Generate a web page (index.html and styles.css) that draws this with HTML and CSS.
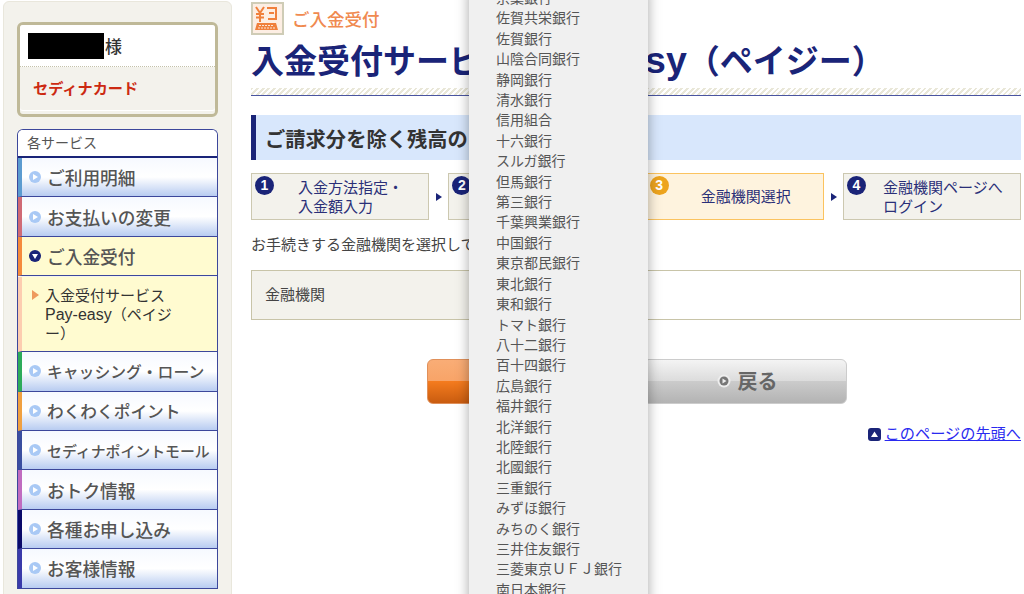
FILE: index.html
```html
<!DOCTYPE html>
<html lang="ja">
<head>
    <meta charset="UTF-8">
    <meta name="viewport" content="width=device-width, initial-scale=1.0">
    <title>入金受付サービス Pay-easy（ペイジー）</title>
    <link rel="stylesheet" href="styles.css">
</head>
<body>
<div class="page">
    <!-- サイドバー -->
    <div class="sidebar">
        <div class="user-card">
            <div class="user-name"><span class="redacted"></span>様</div>
            <div class="user-brand">セディナカード</div>
        </div>

        <div class="menu">
            <div class="menu-title">各サービス</div>
            <a class="menu-item bar-blue"><span class="dot"></span>ご利用明細</a>
            <a class="menu-item bar-red"><span class="dot"></span>お支払いの変更</a>
            <a class="menu-item active bar-orange"><span class="dot"></span>ご入金受付</a>
            <a class="menu-sub"><span class="sub-arrow"></span>入金受付サービス<br><span class="latin">Pay-easy</span>（ペイジ<br>ー）</a>
            <a class="menu-item bar-green text-16"><span class="dot"></span>キャッシング・ローン</a>
            <a class="menu-item bar-amber text-17"><span class="dot"></span>わくわくポイント</a>
            <a class="menu-item bar-indigo text-15"><span class="dot"></span>セディナポイントモール</a>
            <a class="menu-item bar-purple"><span class="dot"></span>おトク情報</a>
            <a class="menu-item bar-navy"><span class="dot"></span>各種お申し込み</a>
            <a class="menu-item bar-violet"><span class="dot"></span>お客様情報</a>
        </div>
    </div>

    <!-- メイン -->
    <div class="main">
        <div class="crumb">
            <span class="crumb-icon">
                <svg width="29" height="29" viewBox="0 0 29 29">
                    <path d="M3 3l4 6 4-6M7 9v9M3 10h8M3 13.500h8" fill="none" stroke="#f0803c" stroke-width="2"/>
                    <path d="M14 4h9v11h-8M16 9h5" fill="none" stroke="#f0803c" stroke-width="2"/>
                    <path d="M4 19h19l2 7H2z" fill="#f0803c"/>
                    <path d="M6 21.500h15M5 24h17" stroke="#fbe6d8" stroke-width="1" stroke-dasharray="2 1"/>
                </svg>
            </span>
            <span class="crumb-text">ご入金受付</span>
        </div>

        <h1>入金受付サービス <span class="latin">Pay-easy</span>（ペイジー）</h1>
        <div class="stripes"></div>

        <h2>ご請求分を除く残高のお支払い</h2>

        <div class="steps">
            <div class="step step-1"><span class="num">1</span>入金方法指定・<br>入金額入力</div>
            <span class="step-arrow"></span>
            <div class="step"><span class="num">2</span></div>
            <span class="step-arrow"></span>
            <div class="step step-3 current"><span class="num">3</span>金融機関選択</div>
            <span class="step-arrow"></span>
            <div class="step step-4"><span class="num">4</span>金融機関ページへ<br>ログイン</div>
        </div>

        <p class="lead">お手続きする金融機関を選択してください。</p>

        <div class="form-row">
            <div class="form-label">金融機関</div>
            <div class="form-value"></div>
        </div>

        <div class="buttons">
            <a class="btn btn-next"></a>
            <a class="btn btn-back">
                <svg width="14" height="14" viewBox="0 0 14 14">
                    <circle cx="7" cy="7" r="6.500" fill="#eeeeee"/>
                    <circle cx="7" cy="7" r="4.500" fill="#777777"/>
                    <path d="M5.500 4.500l4 2.500-4 2.500z" fill="#eeeeee"/>
                </svg>
                戻る
            </a>
        </div>

        <div class="page-top">
            <svg width="13" height="13" viewBox="0 0 13 13">
                <rect width="13" height="13" rx="3" fill="#1a2478"/>
                <path d="M6.500 3.500l3.500 5.500h-7z" fill="#ffffff"/>
            </svg>
            <a href="#">このページの先頭へ</a>
        </div>
    </div>

    <!-- 金融機関プルダウン -->
    <ul class="bank-list">
        <li>京葉銀行</li>
        <li>佐賀共栄銀行</li>
        <li>佐賀銀行</li>
        <li>山陰合同銀行</li>
        <li>静岡銀行</li>
        <li>清水銀行</li>
        <li>信用組合</li>
        <li>十六銀行</li>
        <li>スルガ銀行</li>
        <li>但馬銀行</li>
        <li>第三銀行</li>
        <li>千葉興業銀行</li>
        <li>中国銀行</li>
        <li>東京都民銀行</li>
        <li>東北銀行</li>
        <li>東和銀行</li>
        <li>トマト銀行</li>
        <li>八十二銀行</li>
        <li>百十四銀行</li>
        <li>広島銀行</li>
        <li>福井銀行</li>
        <li>北洋銀行</li>
        <li>北陸銀行</li>
        <li>北國銀行</li>
        <li>三重銀行</li>
        <li>みずほ銀行</li>
        <li>みちのく銀行</li>
        <li>三井住友銀行</li>
        <li>三菱東京ＵＦＪ銀行</li>
        <li>南日本銀行</li>
    </ul>
</div>
</body>
</html>
```

FILE: styles.css
```css
body {
    margin: 0;
    background-color: #ffffff;
    color: #444444;
    font-family: "Liberation Sans", "Noto Sans CJK JP", sans-serif;
    font-size: 15px;
}

.page {
    position: relative;
    display: flex;
    height: 594px;
    overflow: hidden;
}

/* サイドバー */
.sidebar {
    box-sizing: border-box;
    width: 229px;
    height: 620px;
    margin: 1px 0 0 3px;
    padding: 20px 13px 0;
    background-color: #f3f2ec;
    border: 1px solid #e9e7dc;
    border-radius: 6px;
}

.user-card {
    box-sizing: border-box;
    height: 95px;
    margin-bottom: 12px;
    background-color: #f3f2ec;
    border: 3px solid #bfb998;
    border-radius: 6px;
    box-shadow: inset 0 -3px 0 #f3f2ec, inset 0 -4px 0 #ffffff;
}

.user-name {
    display: flex;
    align-items: center;
    height: 41px;
    padding: 0 0 0 8px;
    background-color: #ffffff;
    border-bottom: 1px dotted #c4c1aa;
    border-radius: 3px 3px 0 0;
    color: #333333;
    font-size: 17px;
    font-weight: 500;
}

.redacted {
    width: 76px;
    height: 26px;
    margin-right: 1px;
    background-color: #000000;
}

.user-brand {
    padding: 11px 0 0 13px;
    color: #cc2a12;
    font-size: 15.200px;
    font-weight: 700;
    line-height: 22px;
}

.menu {
    border-top: 1px solid #3c479b;
    border-left: 1px solid #3c479b;
    border-right: 1px solid #3c479b;
    border-radius: 6px 6px 0 0;
}

.menu-title {
    box-sizing: border-box;
    height: 28px;
    padding-left: 9px;
    background-color: #ffffff;
    border-bottom: 2px solid #1a2478;
    border-radius: 5px 5px 0 0;
    color: #555555;
    font-size: 14px;
    line-height: 27px;
}

.menu-item {
    box-sizing: border-box;
    display: flex;
    align-items: center;
    gap: 6px;
    height: 39.4px;
    padding-left: 7px;
    background: linear-gradient(#f6f9ff, #ffffff 50%, #b8ccf1);
    border-bottom: 1.500px solid #3c479b;
    color: #555555;
    font-size: 17.700px;
    font-weight: 500;
    white-space: nowrap;
}

.text-17 {
    font-size: 16.700px;
}

.text-16 {
    font-size: 15.800px;
}

.text-15 {
    font-size: 14.900px;
}

.dot {
    position: relative;
    flex: none;
    width: 12px;
    height: 12px;
    background-color: #a9c9f5;
    border-radius: 50%;
}

.dot::after {
    content: "";
    position: absolute;
    left: 4px;
    top: 3px;
    border-left: 5px solid #ffffff;
    border-top: 3px solid transparent;
    border-bottom: 3px solid transparent;
}

.bar-blue { border-left: 4px solid #5b9bd0; }
.bar-red { border-left: 4px solid #d06a75; }
.bar-orange { border-left: 4px solid #f58a3c; }
.bar-green { border-left: 4px solid #2cab5a; }
.bar-amber { border-left: 4px solid #f0a040; }
.bar-indigo { border-left: 4px solid #3a4ea0; }
.bar-purple { border-left: 4px solid #c06cc0; }
.bar-navy { border-left: 4px solid #0a0a6a; }
.bar-violet { border-left: 4px solid #3a3aaa; }

.menu-item.active {
    background: #fffbd0;
}

.active .dot {
    background-color: #1a2478;
}

.active .dot::after {
    left: 3px;
    top: 4px;
    border-top: 5px solid #ffffff;
    border-left: 3px solid transparent;
    border-right: 3px solid transparent;
    border-bottom: 0;
}

.menu-sub {
    box-sizing: border-box;
    position: relative;
    display: block;
    height: 75px;
    margin-top: 1px;
    padding: 9px 0 0 23px;
    background-color: #fffbd0;
    border-left: 4px solid #fdcdb0;
    border-bottom: 1.500px solid #3c479b;
    color: #333333;
    font-size: 15px;
    line-height: 19px;
}

.menu-sub .latin {
    font-size: 16px;
    line-height: 1;
}

.sub-arrow {
    position: absolute;
    left: 10px;
    top: 13px;
    border-left: 7px solid #ee9a5e;
    border-top: 5px solid transparent;
    border-bottom: 5px solid transparent;
}

/* メイン */
.main {
    box-sizing: border-box;
    width: 770px;
    margin-left: 19px;
}

.crumb {
    display: flex;
    align-items: center;
    gap: 8px;
    height: 34px;
    margin-top: 1px;
}

.crumb-icon {
    box-sizing: border-box;
    display: block;
    width: 33px;
    height: 33px;
    background-color: #fdeee3;
    border: 2px solid #cfccb6;
}

.crumb-text {
    color: #f08a50;
    font-size: 17.500px;
    font-weight: 500;
}

h1 {
    height: 42px;
    margin: 6px 0 0;
    color: #1a2478;
    font-size: 33px;
    font-weight: 700;
    line-height: 42px;
    white-space: nowrap;
}

h1 .latin {
    font-size: 37.500px;
    line-height: 1;
}

.stripes {
    height: 7px;
    margin-top: 5px;
    background: repeating-linear-gradient(135deg, #e9e7d8 0, #e9e7d8 2px, #ffffff 2px, #ffffff 4px);
    border-bottom: 1px solid #4a55a0;
}

h2 {
    box-sizing: border-box;
    height: 45px;
    margin: 19px 0 0;
    padding-left: 9px;
    background-color: #d8e7fc;
    border-left: 5px solid #1a2478;
    color: #333333;
    font-size: 20.300px;
    font-weight: 700;
    line-height: 50px;
}

.steps {
    display: flex;
    align-items: center;
    margin-top: 13px;
}

.step {
    box-sizing: border-box;
    position: relative;
    flex: none;
    display: flex;
    flex-direction: column;
    justify-content: center;
    width: 178px;
    height: 47px;
    background-color: #f3f2ec;
    border: 1.500px solid #ccc8b0;
    color: #2a2f78;
    font-size: 15px;
    line-height: 19px;
}

.step-1 {
    display: block;
    padding: 4px 0 0 46px;
}

.step-3 {
    padding-left: 54px;
}

.step-4 {
    display: block;
    padding: 4px 0 0 39px;
}

.step.current {
    background-color: #fef3de;
    border-color: #fbc35f;
}

.num {
    position: absolute;
    left: 3px;
    top: 2px;
    width: 19px;
    height: 19px;
    background-color: #1a2478;
    border-radius: 50%;
    color: #ffffff;
    font-size: 14px;
    font-weight: 700;
    line-height: 19px;
    text-align: center;
}

.current .num {
    background-color: #eda41e;
}

.step-arrow {
    flex: 1;
    height: 8px;
}

.step-arrow::before {
    content: "";
    display: block;
    width: 0;
    margin-left: 7px;
    border-left: 6px solid #1a2478;
    border-top: 4px solid transparent;
    border-bottom: 4px solid transparent;
}

.lead {
    margin: 15px 0 0;
    line-height: 20px;
    white-space: nowrap;
}

.form-row {
    box-sizing: border-box;
    display: flex;
    height: 50px;
    margin-top: 15px;
    border: 1px solid #c8c4a8;
}

.form-label {
    width: 240px;
    padding-left: 13px;
    background-color: #f3f2ec;
    color: #444444;
    font-size: 15px;
    line-height: 48px;
}

.buttons {
    display: flex;
    justify-content: flex-end;
    gap: 13px;
    margin-top: 39px;
    padding-right: 174px;
}

.btn {
    box-sizing: border-box;
    display: flex;
    align-items: center;
    justify-content: center;
    gap: 7px;
    width: 204px;
    height: 45px;
    border-radius: 6px;
}

.btn-next {
    width: 203px;
    background: linear-gradient(#f9ad76, #f8a468 48%, #f47b1e 50%, #c95c10);
    border: 1px solid #e0905a;
}

.btn-back {
    padding: 0 0 2px 4px;
    background: linear-gradient(#f4f4f4, #dcdcdc 48%, #cbcbcb 50%, #b3b3b3);
    border: 1px solid #cccccc;
    color: #666666;
    font-size: 20px;
    font-weight: 700;
}

.page-top {
    display: flex;
    align-items: center;
    justify-content: flex-end;
    gap: 4px;
    margin-top: 20px;
    line-height: 20px;
}

.page-top a {
    color: #2a2af0;
    font-size: 15.200px;
}

/* プルダウン */
.bank-list {
    position: absolute;
    left: 469px;
    top: -12px;
    box-sizing: border-box;
    width: 179px;
    height: 640px;
    margin: 0;
    padding: 0 0 0 27px;
    list-style: none;
    background-color: #f0f0f0;
    box-shadow: 0 0 12px rgba(0, 0, 0, 0.35);
    color: #555555;
    font-size: 14px;
    line-height: 20.4px;
    white-space: nowrap;
}
```
